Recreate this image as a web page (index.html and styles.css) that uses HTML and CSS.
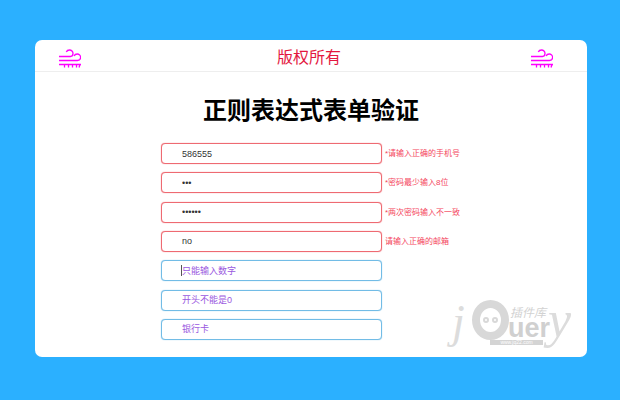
FILE: index.html
```html
<!DOCTYPE html>
<html lang="zh-CN">
<head>
<meta charset="utf-8">
<title>正则表达式表单验证</title>
<link rel="stylesheet" href="styles.css">
</head>
<body>
<main class="card">
  <header class="top">
    <svg class="wind" viewBox="0 0 22 19" aria-hidden="true"><path d="M0 7.5H11.5C13.5 7.5 14 6 14 4.6C14 2.6 12.5 1 10.5 1C9 1 7.8 1.8 7.3 3"/><path d="M0 11.5H18.5C20.5 11.5 21.6 10 21.6 8.4C21.6 6.5 20 5 18.2 5C16.7 5 15.6 5.8 15 7"/><path d="M0 15.5H22"/><path d="M5.5 15.5V18.5M9.5 15.5V18.5M13.5 15.5V18.5M17.5 15.5V18.5M21 15.5L20 18.5"/></svg>
    <span class="rights">版权所有</span>
    <svg class="wind" viewBox="0 0 22 19" aria-hidden="true"><path d="M0 7.5H11.5C13.5 7.5 14 6 14 4.6C14 2.6 12.5 1 10.5 1C9 1 7.8 1.8 7.3 3"/><path d="M0 11.5H18.5C20.5 11.5 21.6 10 21.6 8.4C21.6 6.5 20 5 18.2 5C16.7 5 15.6 5.8 15 7"/><path d="M0 15.5H22"/><path d="M5.5 15.5V18.5M9.5 15.5V18.5M13.5 15.5V18.5M17.5 15.5V18.5M21 15.5L20 18.5"/></svg>
  </header>
  <h1 class="title">正则表达式表单验证</h1>
  <form class="form">
    <div class="row"><input class="field bad" type="text" value="586555"><span class="msg">*请输入正确的手机号</span></div>
    <div class="row"><input class="field bad" type="password" value="123"><span class="msg">*密码最少输入8位</span></div>
    <div class="row"><input class="field bad" type="password" value="123456"><span class="msg">*两次密码输入不一致</span></div>
    <div class="row"><input class="field bad" type="text" value="no"><span class="msg">请输入正确的邮箱</span></div>
    <div class="row"><div class="wrap"><input class="field" type="text" placeholder="只能输入数字"><i class="caret"></i></div></div>
    <div class="row"><input class="field" type="text" placeholder="开头不能是0"></div>
    <div class="row"><input class="field" type="text" placeholder="银行卡"></div>
  </form>
  <div class="mark">
    <span class="j">j</span>
    <span class="q"><i class="eye"></i><i class="eye"></i></span>
    <span class="uer">uer</span>
    <span class="y">y</span>
    <span class="lib">插件库</span>
    <span class="url">www.jq22.com</span>
  </div>
</main>
</body>
</html>
```
FILE: styles.css
```css
* { box-sizing: border-box; }
html, body { height: 100%; }
body {
  margin: 0;
  padding: 40px 33px 43px 35px;
  background: #2bb0ff;
  font-family: "Liberation Sans", "Noto Sans CJK SC", sans-serif;
}
.card {
  position: relative;
  height: 317px;
  background: #fff;
  border-radius: 7px;
  overflow: hidden;
}
.top {
  display: flex;
  align-items: center;
  justify-content: space-between;
  height: 32px;
  padding: 0 34px 0 24px;
  border-bottom: 1px solid #eee;
}
.wind {
  width: 22px;
  height: 19px;
  margin-top: 5px;
  fill: none;
  stroke: #f0f;
  stroke-width: 1.3;
}
.rights {
  margin: 4px 0 0 6px;
  font-size: 16px;
  line-height: 28px;
  color: #e3173e;
}
.title {
  margin: 23px 0 16px;
  font-size: 24px;
  line-height: 32px;
  font-weight: 700;
  text-align: center;
  color: #000;
}
.form {
  display: flex;
  flex-direction: column;
  gap: 8.33px;
  padding-left: 126px;
}
.row {
  display: flex;
  align-items: center;
  gap: 3px;
  height: 21px;
}
.wrap {
  position: relative;
  height: 21px;
}
.field {
  display: block;
  width: 221px;
  height: 21px;
  padding: 0 20px;
  border: 1px solid #72bce6;
  border-radius: 4px;
  outline: none;
  box-shadow: 0 0 1px #72bce6;
  font-family: inherit;
  font-size: 9px;
  color: #333;
  background: #fff;
}
.field::placeholder {
  color: #9a58e0;
  opacity: 1;
}
.field.bad {
  border-color: #ee6a72;
  box-shadow: 0 0 1px #ee6a72;
}
.caret {
  position: absolute;
  left: 20px;
  top: 5px;
  width: 1px;
  height: 11px;
  background: #555;
}
.msg {
  font-size: 8px;
  line-height: 21px;
  color: #f4455c;
  white-space: nowrap;
}
.mark {
  position: absolute;
  right: 10px;
  bottom: 11px;
  width: 132px;
  height: 48px;
  color: #dcdcdc;
}
.mark span { position: absolute; }
.j {
  left: 7px;
  top: 1px;
  font: italic 46px/46px "Liberation Serif", serif;
}
.q {
  left: 27px;
  top: 2px;
  width: 37px;
  height: 40px;
  border: 8px solid #d8d8d8;
  border-radius: 50%;
  display: flex;
  justify-content: center;
  align-items: center;
  gap: 3px;
}
.eye {
  width: 6px;
  height: 6px;
  border: 2px solid #d8d8d8;
  border-radius: 50%;
}
.uer {
  left: 63px;
  top: 23px;
  font: 700 27px/15px "Liberation Sans", sans-serif;
  color: #d0d0d0;
}
.y {
  left: 103px;
  top: 0;
  font: italic 52px/44px "Liberation Serif", serif;
}
.lib {
  left: 65px;
  top: 9px;
  font-size: 12px;
  line-height: 13px;
  font-style: italic;
  color: #d2d2d2;
}
.url {
  left: 45px;
  top: 42px;
  width: 53px;
  font-size: 5px;
  line-height: 5px;
  color: #fff;
  background: #d4d4d4;
  text-align: center;
}
```
